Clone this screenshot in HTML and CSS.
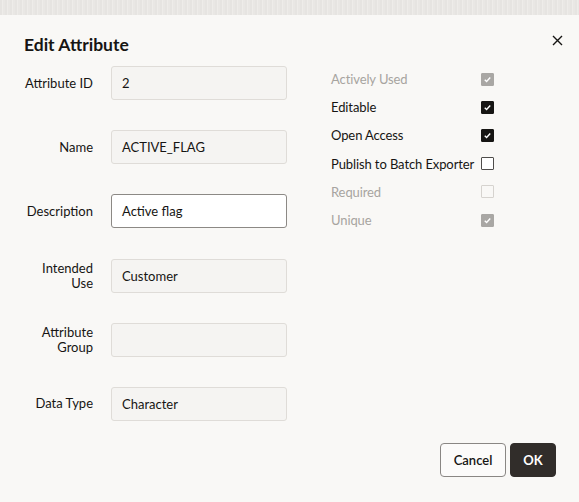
FILE: index.html
```html
<!DOCTYPE html>
<html>
<head>
<meta charset="utf-8">
<link rel="stylesheet" href="styles.css">
</head>
<body>
<div class="backdrop"></div>
<div class="dialog">
  <div class="header">
    <h1 class="title">Edit Attribute</h1>
    <button class="close" aria-label="Close">
      <svg width="11" height="11" viewBox="0 0 11 11"><path d="M1 1L10 10M10 1L1 10" stroke="#161513" stroke-width="1.4" fill="none"/></svg>
    </button>
  </div>
  <div class="body">
    <div class="fields">
      <label class="lbl">Attribute ID</label><div class="inp ro">2</div>
      <label class="lbl">Name</label><div class="inp ro">ACTIVE_FLAG</div>
      <label class="lbl">Description</label><div class="inp edit">Active flag</div>
      <label class="lbl"><span>Intended</span><span>Use</span></label><div class="inp ro">Customer</div>
      <label class="lbl"><span>Attribute</span><span>Group</span></label><div class="inp ro"></div>
      <label class="lbl">Data Type</label><div class="inp ro">Character</div>
    </div>
    <div class="checks">
      <span class="clbl dis">Actively Used</span><span class="cb checked disabled"><svg viewBox="0 0 12 12"><path d="M3 6.3L5 8.2L9 3.8" stroke="#fff" stroke-width="1.5" fill="none"/></svg></span>
      <span class="clbl">Editable</span><span class="cb checked"><svg viewBox="0 0 12 12"><path d="M3 6.3L5 8.2L9 3.8" stroke="#fff" stroke-width="1.5" fill="none"/></svg></span>
      <span class="clbl">Open Access</span><span class="cb checked"><svg viewBox="0 0 12 12"><path d="M3 6.3L5 8.2L9 3.8" stroke="#fff" stroke-width="1.5" fill="none"/></svg></span>
      <span class="clbl">Publish to Batch Exporter</span><span class="cb"></span>
      <span class="clbl dis">Required</span><span class="cb disabled"></span>
      <span class="clbl dis">Unique</span><span class="cb checked disabled"><svg viewBox="0 0 12 12"><path d="M3 6.3L5 8.2L9 3.8" stroke="#fff" stroke-width="1.5" fill="none"/></svg></span>
    </div>
  </div>
  <div class="footer">
    <button class="btn cancel">Cancel</button>
    <button class="btn ok">OK</button>
  </div>
</div>
</body>
</html>
```

FILE: styles.css
```css
html, body {
  margin: 0;
  padding: 0;
}
body {
  width: 579px;
  height: 502px;
  overflow: hidden;
  background: #f9f8f6;
  font-family: "Lato", "Noto Sans", sans-serif;
  color: #161513;
}
.backdrop {
  height: 15px;
  background: repeating-linear-gradient(90deg, #e6e4e1 0 2px, #eeece9 2px 3px, #e9e7e4 3px 5px);
}
.dialog {
  background: #f9f8f6;
}
.header {
  display: flex;
  justify-content: space-between;
  align-items: flex-start;
  padding: 20px 16px 0 24px;
}
.title {
  margin: 0;
  font-size: 17.5px;
  font-weight: 700;
  line-height: 20px;
}
.close {
  border: 0;
  background: none;
  padding: 0;
  width: 11px;
  height: 11px;
  display: flex;
}
.body {
  display: flex;
  padding: 11px 0 0 0;
}
.fields {
  display: grid;
  grid-template-columns: 93px 176px;
  column-gap: 18px;
  row-gap: 30.2px;
  width: 331px;
  align-items: center;
}
.lbl {
  display: flex;
  flex-direction: column;
  align-items: flex-end;
  font-size: 13px;
  line-height: 15px;
  color: #161513;
}
.inp {
  box-sizing: border-box;
  height: 34px;
  border: 1px solid #dfdcd8;
  border-radius: 3px;
  background: #f5f4f2;
  font-size: 13px;
  line-height: 32px;
  padding-left: 10px;
}
.inp.edit {
  background: #fff;
  border-color: #8c8985;
}
.checks {
  display: grid;
  grid-template-columns: 150px 13px;
  grid-auto-rows: 28.2px;
  align-items: center;
  align-content: start;
  margin-top: -1px;
}
.clbl {
  font-size: 13px;
  line-height: 16px;
  white-space: nowrap;
  letter-spacing: -0.1px;
}
.clbl.dis {
  color: #a7a4a0;
}
.cb {
  box-sizing: border-box;
  width: 13px;
  height: 13px;
  border: 1px solid #4f4d4b;
  border-radius: 1px;
  display: flex;
  background: #fff;
}
.cb svg {
  width: 11px;
  height: 11px;
}
.cb.checked {
  background: #161513;
  border-color: #161513;
}
.cb.disabled {
  border-color: #d6d3cf;
  background: #f9f8f6;
}
.cb.checked.disabled {
  background: #a9a7a4;
  border-color: #a9a7a4;
}
.footer {
  display: flex;
  justify-content: flex-end;
  gap: 4px;
  padding: 22px 23px 0 0;
}
.btn {
  box-sizing: border-box;
  height: 34px;
  border-radius: 4px;
  font-family: inherit;
  font-size: 13px;
  padding: 0;
}
.cancel {
  width: 66px;
  background: #fcfbfa;
  border: 1px solid #8a8784;
  color: #161513;
  font-weight: 600;
}
.ok {
  width: 46px;
  background: #312d2a;
  border: 1px solid #312d2a;
  color: #fff;
  font-weight: 700;
}
```
